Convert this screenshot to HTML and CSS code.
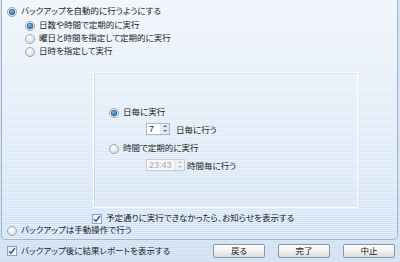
FILE: index.html
```html
<!doctype html>
<html>
    <head>
        <meta charset="utf-8">
        <title>バックアップ設定</title>
        <link rel="stylesheet" href="styles.css">
    </head>
    <body>
        <div class="panel">
            <label class="opt"><span class="radio on"></span>バックアップを自動的に行うようにする</label>
            <div class="sub">
                <label class="opt"><span class="radio on"></span>日数や時間で定期的に実行</label>
                <label class="opt"><span class="radio"></span>曜日と時間を指定して定期的に実行</label>
                <label class="opt"><span class="radio"></span>日時を指定して実行</label>
            </div>
            <div class="detail">
                <label class="opt"><span class="radio on"></span>日毎に実行</label>
                <div class="spin-row">
                    <span class="spin days"><span class="val">7</span><span class="arrows"><i class="up"></i><i class="down"></i></span></span>
                    <span class="unit">日毎に行う</span>
                </div>
                <label class="opt gap"><span class="radio"></span>時間で定期的に実行</label>
                <div class="spin-row">
                    <span class="spin hours off"><span class="val">23:43</span><span class="arrows"><i class="up"></i><i class="down"></i></span></span>
                    <span class="unit near">時間毎に行う</span>
                </div>
            </div>
            <label class="opt notify"><span class="check"><svg width="8" height="8" viewBox="0 0 8 8"><path d="M1 4.2 L3 6.3 L7 1" fill="none" stroke="#3a5f96" stroke-width="1.5"/></svg></span>予定通りに実行できなかったら、お知らせを表示する</label>
            <label class="opt manual"><span class="radio"></span>バックアップは手動操作で行う</label>
        </div>
        <div class="footer">
            <label class="opt"><span class="check"><svg width="8" height="8" viewBox="0 0 8 8"><path d="M1 4.2 L3 6.3 L7 1" fill="none" stroke="#3a5f96" stroke-width="1.5"/></svg></span>バックアップ後に結果レポートを表示する</label>
            <div class="buttons">
                <button>戻る</button>
                <button>完了</button>
                <button>中止</button>
            </div>
        </div>
    </body>
</html>
```

FILE: styles.css
```css
html,
body {
    margin: 0;
    width: 400px;
    height: 262px;
    overflow: hidden;
}

* {
    box-sizing: border-box;
    font-family: "Liberation Sans", "Noto Sans CJK JP", sans-serif;
}

body {
    font-size: 8.5px;
    color: #1b1b1b;
    font-feature-settings: "palt";
    background:
        repeating-linear-gradient(to bottom, rgba(255,255,255,.3) 0 1px, transparent 1px 2px),
        #cfdff3;
}

.panel {
    margin-left: 1px;
    width: 397px;
    height: 240px;
    padding: 5px 0 0 5px;
    border: 1px solid #9fb6d1;
    border-top: none;
    border-radius: 0 0 5px 5px;
    background:
        repeating-linear-gradient(to bottom, rgba(255,255,255,.4) 0 1px, transparent 1px 2px),
        linear-gradient(to bottom, #eef4fb, #e0ebf8 50%, #d1e2f5);
}

.opt {
    display: flex;
    align-items: center;
    height: 13px;
    line-height: 13px;
    white-space: nowrap;
}

.radio {
    width: 10px;
    height: 10px;
    margin-right: 4px;
    border-radius: 50%;
    border: 1px solid #9aa6b3;
    background: radial-gradient(circle at 40% 35%, #ffffff, #e2e6ea 60%, #c9cfd6);
    display: flex;
    align-items: center;
    justify-content: center;
    flex-shrink: 0;
}

.radio.on::after {
    content: "";
    width: 4px;
    height: 4px;
    border-radius: 50%;
    background: radial-gradient(circle at 40% 35%, #6fd0f0, #1c63b0 70%);
    box-shadow: 0 0 0 1px #2f5f8f;
}

.check {
    width: 10px;
    height: 10px;
    margin-right: 4px;
    border: 1px solid #8ea3bd;
    background: linear-gradient(to bottom right, #e8ecf2, #ffffff);
    display: flex;
    align-items: center;
    justify-content: center;
    flex-shrink: 0;
}

.sub {
    margin: 1px 0 0 18px;
}

.detail {
    margin: 14px 0 0 86px;
    width: 265px;
    height: 136px;
    padding: 33px 0 0 15px;
    border: 1px solid rgba(255,255,255,.9);
    box-shadow: inset 1px 1px 0 rgba(170,188,210,.35);
}

.detail .gap {
    margin-top: 7px;
}

.spin-row {
    display: flex;
    align-items: center;
    height: 13px;
    margin: 3px 0 0 37px;
}

.spin {
    display: flex;
    height: 12px;
    border: 1px solid #a9b8c8;
    background: #fff;
}

.spin.days {
    width: 24px;
}

.spin.hours {
    width: 39px;
}

.spin .val {
    flex: 1;
    padding-left: 2px;
    line-height: 10px;
    font-size: 9px;
}

.spin.off {
    background: #f6f7f8;
    border-color: #c4ccd4;
    color: #a7a7a7;
}

.arrows {
    width: 9px;
    display: flex;
    flex-direction: column;
    border-left: 1px solid #dde4ec;
    background: linear-gradient(to right, #eef2f7, #d9e2ec);
}

.arrows i {
    flex: 1;
    display: flex;
    align-items: center;
    justify-content: center;
}

.arrows .up::after {
    content: "";
    border: 2px solid transparent;
    border-top: none;
    border-bottom: 2px solid #4d6f99;
}

.arrows .down::after {
    content: "";
    border: 2px solid transparent;
    border-bottom: none;
    border-top: 2px solid #4d6f99;
}

.spin.off .arrows {
    background: #eef0f2;
}

.spin.off .arrows .up::after {
    border-bottom-color: #b9c0c8;
}

.spin.off .arrows .down::after {
    border-top-color: #b9c0c8;
}

.unit {
    margin-left: 6px;
}

.unit.near {
    margin-left: 2px;
}

.notify {
    margin: 4px 0 0 85px;
}

.manual {
    margin-top: -1px;
}

.footer {
    height: 22px;
    display: flex;
    align-items: center;
    justify-content: space-between;
    padding: 0 5px 0 7px;
}

.buttons {
    display: flex;
    gap: 13px;
}

button {
    width: 52px;
    height: 14px;
    padding: 0;
    font-size: 8.5px;
    line-height: 12px;
    color: #1b1b1b;
    border: 1px solid #8e969e;
    border-radius: 2px;
    background: linear-gradient(to bottom, #ffffff, #f3f3f3 45%, #dcdcdc);
    font-feature-settings: "palt";
}
```
